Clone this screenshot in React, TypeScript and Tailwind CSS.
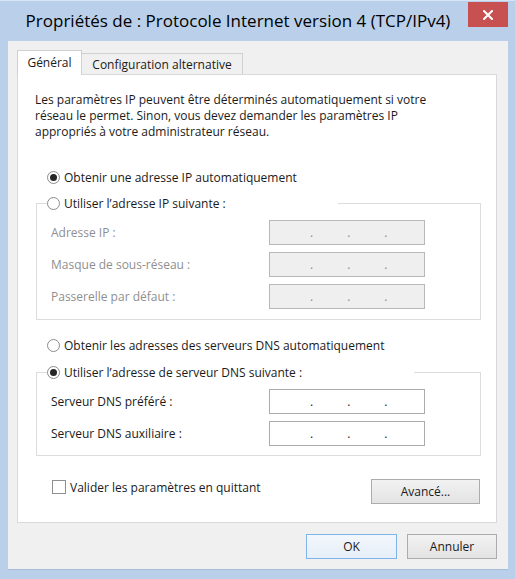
import React from 'react';

function Radio({ checked, label }: { checked?: boolean; label: string }) {
  return (
    <label className="flex items-center gap-[4px] h-[16px] whitespace-nowrap">
      <span className="w-[13px] h-[13px] rounded-full border border-[#8c8c8c] bg-white flex items-center justify-center">
        {checked && <span className="w-[7px] h-[7px] rounded-full bg-[#262626]" />}
      </span>
      <span>{label}</span>
    </label>
  );
}

function IpField({ disabled }: { disabled?: boolean }) {
  return (
    <div
      className={
        disabled
          ? 'w-[156px] h-[25px] border border-[#b8b8b8] bg-[#efefef] text-[#8a8a8a] flex items-center pl-[40px] gap-[34px]'
          : 'w-[156px] h-[25px] border border-[#ababab] bg-white text-[#222] flex items-center pl-[40px] gap-[34px]'
      }
    >
      <span>.</span>
      <span>.</span>
      <span>.</span>
    </div>
  );
}

function FieldRow({ label, disabled }: { label: string; disabled?: boolean }) {
  return (
    <div className="flex items-center h-[25px]">
      <span className={disabled ? 'w-[218px] text-[#8f8f8f]' : 'w-[218px] text-[#1a1a1a]'}>{label}</span>
      <IpField disabled={disabled} />
    </div>
  );
}

function Button({ label, primary, className }: { label: string; primary?: boolean; className?: string }) {
  return (
    <button
      className={
        (primary
          ? 'border-[#7eb4ea] bg-gradient-to-b from-[#f2f7fc] to-[#e6eef7] '
          : 'border-[#acacac] bg-gradient-to-b from-[#f2f2f2] to-[#e3e3e3] ') +
        'h-[25px] border text-[#1a1a1a] flex items-center justify-center ' +
        (className || '')
      }
    >
      {label}
    </button>
  );
}

export default function App() {
  return (
    <div className="w-[515px] h-[579px] bg-[#bad0ea] flex flex-col font-['Open_Sans','Noto_Sans',sans-serif] text-[12px] leading-[15px] text-[#1a1a1a] border-t border-[#d7e4f3]">
      {/* title bar */}
      <div className="flex h-[40px] shrink-0">
        <div className="flex-1 pl-[8px] flex items-center justify-center pb-[1px] text-[17px] leading-[22px] text-black">
          Propriétés de : Protocole Internet version 4 (TCP/IPv4)
        </div>
        <div className="mt-[1px] mr-[7px] w-[40px] h-[25px] bg-[#c75050] flex items-center justify-center">
          <svg width="10" height="10" viewBox="0 0 10 10">
            <path d="M1 1 L9 9 M9 1 L1 9" stroke="white" strokeWidth="2" strokeLinecap="square" />
          </svg>
        </div>
      </div>

      {/* client area */}
      <div className="ml-[8px] mr-[7px] h-[529px] bg-[#f0f0f0] pt-[9px] pl-[9px] pr-[11px] pb-[11px] flex flex-col border-b border-[#a6bcd8]">
        {/* tabs */}
        <div className="flex items-end h-[24px] relative z-10">
          <div className="h-[25px] -mb-px w-[65px] bg-white border border-b-0 border-[#d0d0d0] flex items-center justify-center pb-[1px]">
            Général
          </div>
          <div className="h-[21px] w-[161px] bg-[#f0f0f0] border-t border-r border-[#d0d0d0] flex items-center justify-center">
            Configuration alternative
          </div>
        </div>

        <div className="bg-white border border-[#d9d9d9] pt-[17px] pl-[17px] pr-[15px] pb-[18px]">
          <p className="leading-[16px]">
            Les paramètres IP peuvent être déterminés automatiquement si votre
            <br />
            réseau le permet. Sinon, vous devez demander les paramètres IP
            <br />
            appropriés à votre administrateur réseau.
          </p>

          <div className="mt-[29px] ml-[12px]">
            <Radio checked label="Obtenir une adresse IP automatiquement" />
          </div>

          <fieldset className="mt-[10px] ml-[1px] border border-[#dcdcdc] pl-[14px] pr-[14px] pt-[9px] pb-[10px] flex flex-col gap-[7px]">
            <legend className="-ml-[4px] w-[291px] bg-white">
              <Radio label="Utiliser l’adresse IP suivante :" />
            </legend>
            <FieldRow label="Adresse IP :" disabled />
            <FieldRow label="Masque de sous-réseau :" disabled />
            <FieldRow label="Passerelle par défaut :" disabled />
          </fieldset>

          <div className="mt-[17px] ml-[12px]">
            <Radio label="Obtenir les adresses des serveurs DNS automatiquement" />
          </div>

          <fieldset className="mt-[11px] ml-[1px] border border-[#dcdcdc] pl-[14px] pr-[14px] pt-[9px] pb-[9px] flex flex-col gap-[7px]">
            <legend className="-ml-[4px] w-[367px] bg-white">
              <Radio checked label="Utiliser l’adresse de serveur DNS suivante :" />
            </legend>
            <FieldRow label="Serveur DNS préféré :" />
            <FieldRow label="Serveur DNS auxiliaire :" />
          </fieldset>

          <div className="mt-[23px] flex items-start justify-between">
            <label className="mt-[1px] ml-[17px] flex items-center gap-[4px] h-[14px]">
              <span className="w-[14px] h-[14px] border border-[#8e8f8f] bg-white" />
              <span>Valider les paramètres en quittant</span>
            </label>
            <Button label="Avancé..." className="w-[109px] mr-[1px]" />
          </div>
        </div>

        <div className="mt-[11px] flex justify-end gap-[10px]">
          <Button label="OK" primary className="w-[91px]" />
          <Button label="Annuler" className="w-[90px]" />
        </div>
      </div>
    </div>
  );
}
